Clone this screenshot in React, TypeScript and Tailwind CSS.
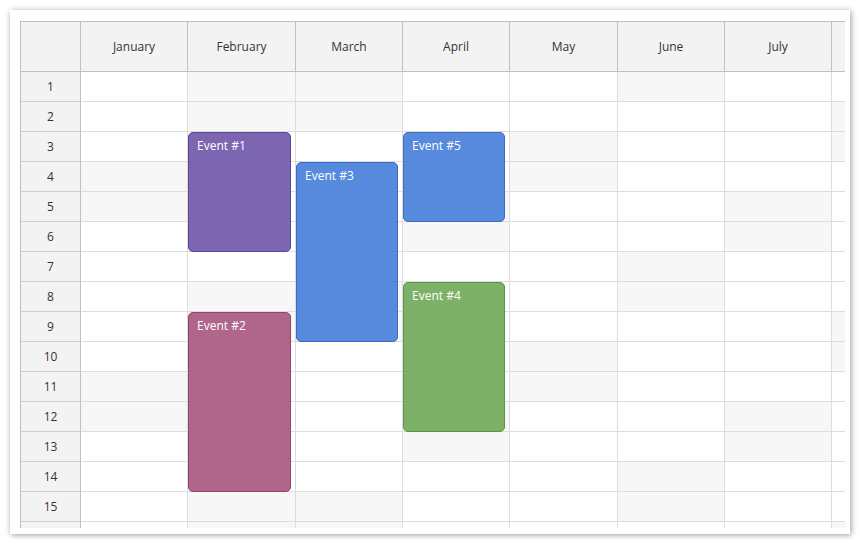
import React from "react";

const months = ["January", "February", "March", "April", "May", "June", "July", "August"];
const colWidths = [107, 108, 107, 107, 108, 107, 107, 107];
const colStarts = colWidths.reduce<number[]>((acc, w, i) => {
  acc.push(i === 0 ? 0 : acc[i - 1] + colWidths[i - 1]);
  return acc;
}, []);

const days = Array.from({ length: 16 }, (_, i) => i + 1);

type CalEvent = { text: string; month: number; start: number; end: number; color: string };

const events: CalEvent[] = [
  { text: "Event #1", month: 1, start: 3, end: 6, color: "bg-[#6e55a8]/90 border-[#5d4497]" },
  { text: "Event #2", month: 1, start: 9, end: 14, color: "bg-[#a6557d]/90 border-[#954270]" },
  { text: "Event #3", month: 2, start: 4, end: 9, color: "bg-[#457dd8]/90 border-[#3a6cc2]" },
  { text: "Event #4", month: 3, start: 8, end: 12, color: "bg-[#6fa957]/90 border-[#5b9544]" },
  { text: "Event #5", month: 3, start: 3, end: 5, color: "bg-[#457dd8]/90 border-[#3a6cc2]" },
];

function isWeekend(month: number, day: number) {
  const d = new Date(2025, month, day).getDay();
  return d === 0 || d === 6;
}

function EventBox({ ev }: Readonly<{ ev: CalEvent }>) {
  const left = 60 + colStarts[ev.month];
  const width = colWidths[ev.month] - 5;
  const top = (ev.start - 1) * 30;
  const height = (ev.end - ev.start + 1) * 30;
  return (
    <div
      className={`absolute rounded-[5px] border px-2 pt-[4px] text-[12px] text-white ${ev.color}`}
      style={{ left, top, width, height }}
    >
      {ev.text}
    </div>
  );
}

export default function App() {
  return (
    <div className="h-[544px] w-[860px] bg-white p-[10px] font-['Open_Sans',sans-serif]">
      <div className="h-[524px] w-[840px] bg-white pb-[6px] pl-[10px] pr-[5px] pt-[11px] shadow-[1px_1px_6px_rgba(0,0,0,0.4)]">
        <div className="h-[507px] w-[825px] overflow-hidden border-l border-t border-[#c0c0c0]">
          <div className="flex h-[50px] w-max">
            <div className="h-[50px] w-[60px] shrink-0 border-b border-r border-[#c0c0c0] bg-[#f3f3f3]" />
            {months.map((m, i) => (
              <div
                key={m}
                className="flex h-[50px] shrink-0 items-center justify-center border-b border-r border-[#c0c0c0] bg-[#f3f3f3] text-[12px] text-[#333]"
                style={{ width: colWidths[i] }}
              >
                {i < 7 ? m : ""}
              </div>
            ))}
          </div>
          <div className="relative w-max">
            {days.map((d) => (
              <div key={d} className="flex h-[30px]">
                <div className="flex h-[30px] w-[60px] shrink-0 items-center justify-center border-b border-r border-[#c0c0c0] border-b-[#cfcfcf] bg-[#f3f3f3] text-[12px] text-[#333]">
                  {d < 16 ? d : ""}
                </div>
                {months.map((m, i) => (
                  <div
                    key={m}
                    className={`h-[30px] shrink-0 border-b border-r border-[#dddddd] ${
                      isWeekend(i, d) ? "bg-[#f7f7f7]" : "bg-white"
                    }`}
                    style={{ width: colWidths[i] }}
                  />
                ))}
              </div>
            ))}
            {events.map((ev) => (
              <EventBox key={ev.text} ev={ev} />
            ))}
          </div>
        </div>
      </div>
    </div>
  );
}
